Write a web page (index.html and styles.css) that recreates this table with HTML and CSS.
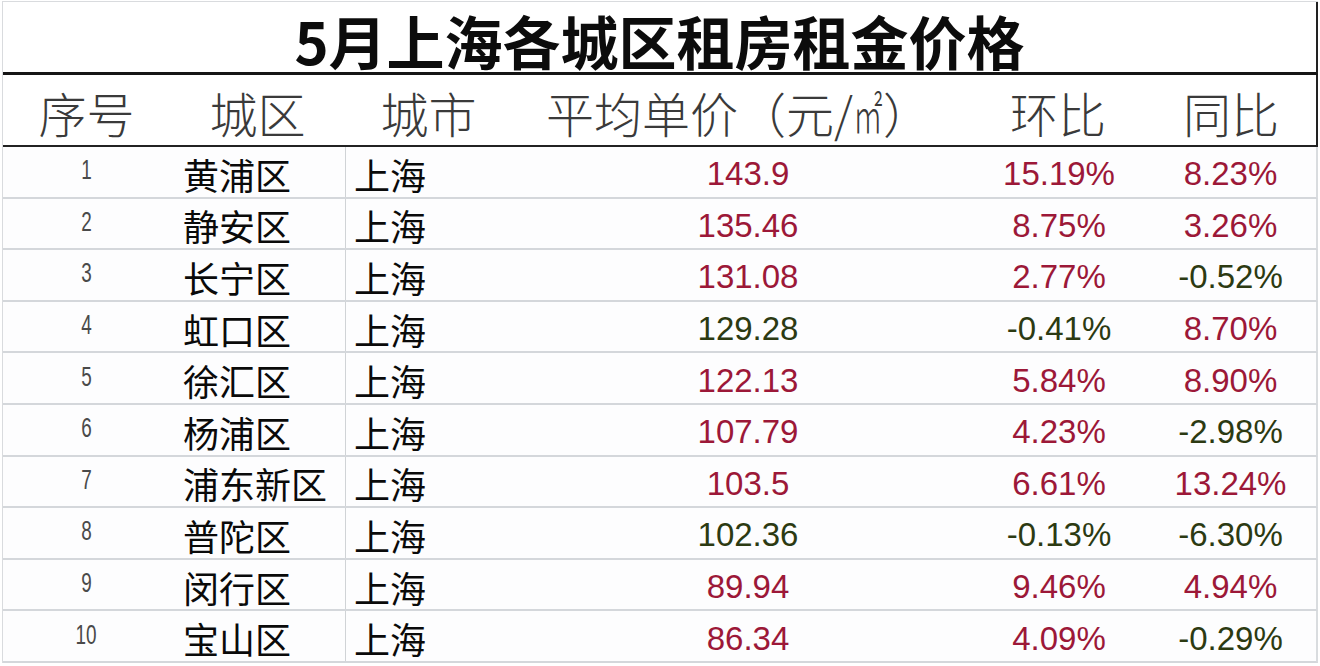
FILE: index.html
```html
<!DOCTYPE html>
<html lang="zh-CN">
<head>
<meta charset="utf-8">
<title>5月上海各城区租房租金价格</title>
<link rel="stylesheet" href="styles.css">
</head>
<body>
<div class="sheet">
  <div class="title">5月上海各城区租房租金价格</div>
  <div class="head">
    <div class="h">序号</div>
    <div class="h">城区</div>
    <div class="h">城市</div>
    <div class="h">平均单价（元/<span class="sq">㎡</span>）</div>
    <div class="h">环比</div>
    <div class="h">同比</div>
  </div>
  <div class="row"><div class="idx"><span>1</span></div><div class="dist">黄浦区</div><div class="city">上海</div><div class="num up">143.9</div><div class="num mom up">15.19%</div><div class="num up">8.23%</div></div>
  <div class="row"><div class="idx"><span>2</span></div><div class="dist">静安区</div><div class="city">上海</div><div class="num up">135.46</div><div class="num mom up">8.75%</div><div class="num up">3.26%</div></div>
  <div class="row"><div class="idx"><span>3</span></div><div class="dist">长宁区</div><div class="city">上海</div><div class="num up">131.08</div><div class="num mom up">2.77%</div><div class="num down">-0.52%</div></div>
  <div class="row"><div class="idx"><span>4</span></div><div class="dist">虹口区</div><div class="city">上海</div><div class="num down">129.28</div><div class="num mom down">-0.41%</div><div class="num up">8.70%</div></div>
  <div class="row"><div class="idx"><span>5</span></div><div class="dist">徐汇区</div><div class="city">上海</div><div class="num up">122.13</div><div class="num mom up">5.84%</div><div class="num up">8.90%</div></div>
  <div class="row"><div class="idx"><span>6</span></div><div class="dist">杨浦区</div><div class="city">上海</div><div class="num up">107.79</div><div class="num mom up">4.23%</div><div class="num down">-2.98%</div></div>
  <div class="row"><div class="idx"><span>7</span></div><div class="dist">浦东新区</div><div class="city">上海</div><div class="num up">103.5</div><div class="num mom up">6.61%</div><div class="num up">13.24%</div></div>
  <div class="row"><div class="idx"><span>8</span></div><div class="dist">普陀区</div><div class="city">上海</div><div class="num down">102.36</div><div class="num mom down">-0.13%</div><div class="num down">-6.30%</div></div>
  <div class="row"><div class="idx"><span>9</span></div><div class="dist">闵行区</div><div class="city">上海</div><div class="num up">89.94</div><div class="num mom up">9.46%</div><div class="num up">4.94%</div></div>
  <div class="row"><div class="idx"><span>10</span></div><div class="dist">宝山区</div><div class="city">上海</div><div class="num up">86.34</div><div class="num mom up">4.09%</div><div class="num down">-0.29%</div></div>
</div>
</body>
</html>
```
FILE: styles.css
```css
* { box-sizing: border-box; }
html, body { margin: 0; padding: 0; background: #fff; }
body {
  font-family: "Noto Sans CJK SC", "Liberation Sans", sans-serif;
  color: #111;
  overflow: hidden;
}
.sheet {
  margin: 1px 0 0 2px;
  width: 1316px;
  border-top: 1px solid #d9dbde;
  border-left: 1px solid #d9dbde;
  background: #fdfdfe;
}
.title {
  height: 73px;
  border-bottom: 3px solid #151515;
  border-right: 2px solid #222;
  display: flex;
  align-items: center;
  justify-content: center;
  padding-top: 6px;
  font-size: 58px;
  font-weight: 700;
  line-height: 1;
  color: #0c0c0c;
  background: #fff;
}
.head {
  height: 72px;
  border-bottom: 2px solid #222;
  border-right: 2px solid #222;
  display: grid;
  grid-template-columns: 167px 175px 167px 453px 186px 160px 1fr;
  align-items: center;
  padding-top: 4px;
  background: #fff;
}
.h {
  text-align: center;
  font-size: 48px;
  font-weight: 300;
  line-height: 1;
  color: #3a3a3a;
  white-space: nowrap;
}
.sq {
  display: inline-block;
  width: 30px;
  transform: scaleX(0.62);
  transform-origin: left center;
}
.row {
  height: 51.6px;
  border-bottom: 2px solid #d4d7db;
  border-right: 2px solid #d9dcdf;
  display: grid;
  grid-template-columns: 167px 175px 275px 256px 269px 1fr;
  background: #fdfdfe;
}
.row > div {
  display: flex;
  align-items: center;
  padding-top: 4px;
  line-height: 1;
  white-space: nowrap;
}
.idx {
  justify-content: center;
  padding-bottom: 6px;
  font-family: "Liberation Sans", sans-serif;
  font-size: 27px;
  color: #4a4a4a;
}
.idx span {
  display: inline-block;
  transform: scaleX(0.7);
}
.dist {
  padding-left: 13px;
  font-size: 36px;
  font-weight: 400;
  color: #0a0a0a;
}
.city {
  padding-left: 8px;
  border-left: 1px solid #d0d3d6;
  font-size: 36px;
  font-weight: 400;
  color: #0a0a0a;
}
.num {
  justify-content: center;
  font-family: "Liberation Sans", sans-serif;
  font-size: 33px;
}
.mom { padding-left: 97px; }
.up { color: #9c1838; }
.down { color: #2c3a12; }
```
